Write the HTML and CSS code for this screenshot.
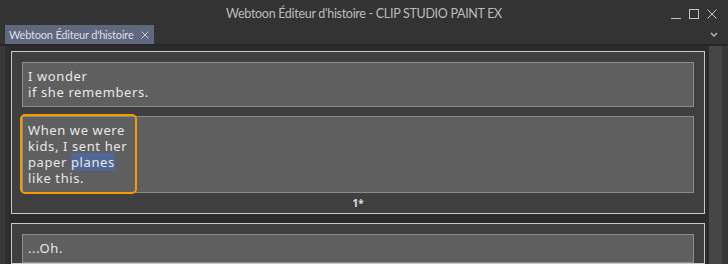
FILE: index.html
```html
<!DOCTYPE html>
<html>
<head>
<meta charset="utf-8">
<link rel="stylesheet" href="styles.css">
</head>
<body>
<div class="titlebar">
  <div class="tb-side"></div>
  <div class="title">Webtoon Éditeur d'histoire - CLIP STUDIO PAINT EX</div>
  <div class="tb-side controls">
    <svg class="ctl" width="12" height="12" viewBox="0 0 12 12"><path d="M1 10.5H11" stroke="#c4c4c4" stroke-width="1"/></svg>
    <svg class="ctl" width="12" height="12" viewBox="0 0 12 12"><rect x="1.5" y="1.5" width="9" height="9" fill="none" stroke="#c4c4c4" stroke-width="1"/></svg>
    <svg class="ctl" width="12" height="12" viewBox="0 0 12 12"><path d="M1.5 1.5L10.5 10.5M10.5 1.5L1.5 10.5" stroke="#c4c4c4" stroke-width="1"/></svg>
  </div>
</div>
<div class="tabrow">
  <div class="tab">
    <span class="tab-label">Webtoon Éditeur d'histoire</span>
    <svg class="tab-x" width="8" height="8" viewBox="0 0 8 8"><path d="M0.5 0.5L7.5 7.5M7.5 0.5L0.5 7.5" stroke="#c8c8d0" stroke-width="1"/></svg>
  </div>
  <svg class="chev" width="8" height="5" viewBox="0 0 8 5"><path d="M1 1L4 4L7 1" fill="none" stroke="#bdbdbd" stroke-width="1.3"/></svg>
</div>
<div class="sep"></div>
<div class="main">
  <div class="leftstrip"><div class="ls-a"></div><div class="ls-b"></div></div>
  <div class="content">
    <div class="panel">
      <div class="box">I wonder<br>if she remembers.</div>
      <div class="box">When we were<br>kids, I sent her<br>paper <span class="hl">planes</span><br>like this.<div class="focus"></div></div>
      <div class="pagenum">1*</div>
    </div>
    <div class="panel">
      <div class="box">...Oh.</div>
    </div>
  </div>
  <div class="scrollbar"></div>
  <div class="rightstrip"></div>
</div>
</body>
</html>
```
FILE: styles.css
```css
html, body {
  margin: 0;
  padding: 0;
  background: #333333;
  width: 728px;
  height: 264px;
  overflow: hidden;
}
body {
  display: flex;
  flex-direction: column;
  font-family: "Lato", "Noto Sans", sans-serif;
}
.titlebar {
  height: 25px;
  display: grid;
  grid-template-columns: 1fr auto 1fr;
  align-items: center;
  flex: none;
}
.title {
  color: #bcbcbc;
  font-size: 12.5px;
  letter-spacing: -0.3px;
  padding-top: 1px;
  white-space: nowrap;
}
.controls {
  display: flex;
  justify-content: flex-end;
  gap: 6px;
  padding-right: 10px;
  padding-top: 3px;
}
.tabrow {
  height: 19px;
  display: flex;
  align-items: stretch;
  padding-left: 5px;
  flex: none;
}
.tab {
  background: #5f687f;
  width: 149px;
  box-sizing: border-box;
  display: flex;
  align-items: center;
  padding-left: 4px;
  gap: 7px;
  color: #dedfe4;
  font-size: 11px;
  letter-spacing: -0.2px;
  white-space: nowrap;
  overflow: hidden;
}
.tab-x { margin-top: 1px; flex: none; }
.chev {
  margin-left: auto;
  margin-right: 10px;
  margin-top: 7px;
}
.sep {
  height: 2px;
  background: #262626;
  flex: none;
}
.main {
  flex: 1;
  display: flex;
  min-height: 0;
}
.leftstrip { width: 9px; display: flex; flex: none; }
.ls-a { width: 5px; background: #393939; }
.ls-b { width: 4px; background: #2f2f2f; }
.content {
  flex: 1;
  background: #2b2b2b;
  padding: 5px 4px 0 2px;
  display: flex;
  flex-direction: column;
  gap: 9px;
  overflow: hidden;
}
.panel {
  border: 1px solid #c8c8c8;
  background: #3f3f3f;
  padding: 10px 10px 0 10px;
  display: flex;
  flex-direction: column;
  gap: 9px;
  flex: none;
}
.box {
  position: relative;
  border: 1px solid #8c8c8c;
  background: #5f5f5f;
  color: #e8e8e8;
  font-family: "Noto Sans", "DejaVu Sans", sans-serif;
  font-size: 13px;
  letter-spacing: 0.6px;
  line-height: 16px;
  padding: 5px 5px 6px 5px;
}
.hl { background: #4f6696; }
.focus {
  position: absolute;
  left: -3px;
  top: -3px;
  width: 113px;
  height: 76px;
  border: 2.5px solid #f59a00;
  border-radius: 5px;
}
.pagenum {
  text-align: center;
  color: #e0e0e0;
  font-family: "Noto Sans", "DejaVu Sans", sans-serif;
  font-size: 10px;
  font-weight: bold;
  height: 20px;
  line-height: 20px;
  margin-top: -9px;
}
.scrollbar { width: 13px; background: #464646; flex: none; }
.rightstrip { width: 6px; background: #383838; flex: none; }
```
